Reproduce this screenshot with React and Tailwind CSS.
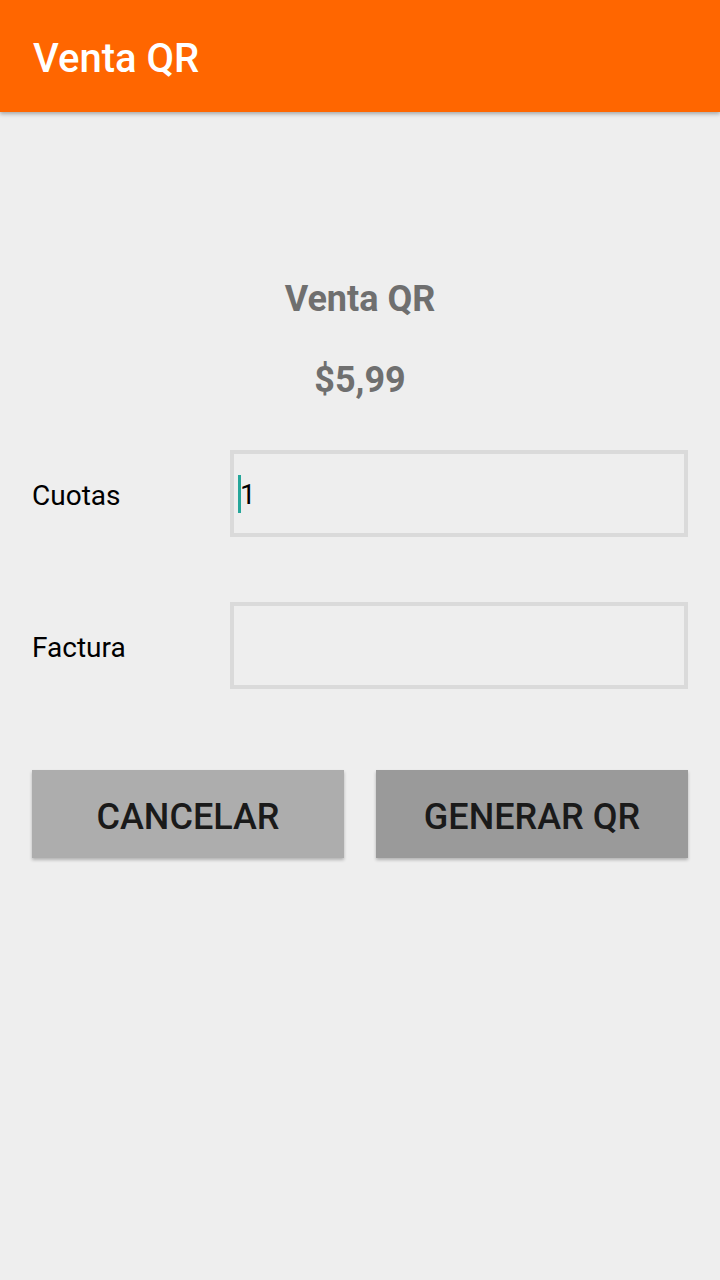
import React from "react";

const App = () => {
  return (
    <div className="min-h-screen bg-[#eeeeee] font-['Roboto',sans-serif]">
      <header className="h-[112px] bg-[#ff6600] flex items-center px-[33px] pt-[6px] shadow-[0_2px_4px_rgba(0,0,0,0.3)]">
        <h1 className="text-[40px] font-medium text-white leading-none">Venta QR</h1>
      </header>

      <div className="px-[32px] pt-[167px]">
        <h2 className="text-center text-[36px] font-bold text-[#6f6f6f] leading-[40px]">Venta QR</h2>
        <p className="text-center text-[36px] font-bold text-[#6f6f6f] leading-[40px] mt-[41px]">$5,99</p>

        <div className="flex items-center mt-[50px]">
          <label className="w-[198px] text-[28px] text-black pt-[4px]">Cuotas</label>
          <div className="flex-1 h-[87px] border-4 border-[#dadada] flex items-center pl-[4px]">
            <span className="w-[3px] h-[38px] bg-[#26a69a]"></span>
            <span className="text-[28px] text-black leading-none -ml-[1px] pt-[2px]">1</span>
          </div>
        </div>

        <div className="flex items-center mt-[65px]">
          <label className="w-[198px] text-[28px] text-black pt-[4px]">Factura</label>
          <div className="flex-1 h-[87px] border-4 border-[#dadada]"></div>
        </div>

        <div className="grid grid-cols-2 gap-[32px] mt-[81px]">
          <button className="h-[88px] bg-[#adadad] text-[36px] font-medium text-[#1a1a1a] pt-[5px] shadow-[0_2px_3px_rgba(0,0,0,0.25)]">
            CANCELAR
          </button>
          <button className="h-[88px] bg-[#9a9a9a] text-[36px] font-medium text-[#1a1a1a] pt-[5px] shadow-[0_2px_3px_rgba(0,0,0,0.25)]">
            GENERAR QR
          </button>
        </div>
      </div>
    </div>
  );
};

export default App;
